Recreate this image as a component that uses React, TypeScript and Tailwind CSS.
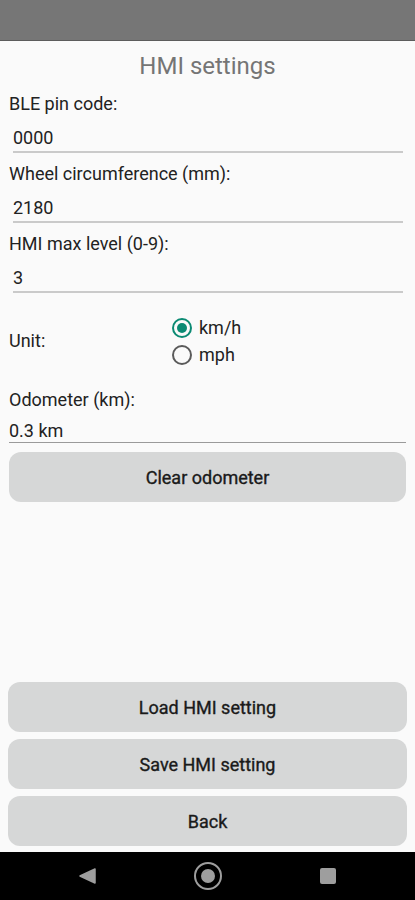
import React, { useState } from "react";

// ─── Small pieces ──────────────────────────────────────────────────────────

function Field({ label, value }: { label: string; value: string }) {
  return (
    <div className="flex flex-col">
      <div className="pl-[9px] h-6 leading-6 text-[18px] text-[#222]">{label}</div>
      <div className="mt-[10px] ml-[13px] mr-[12px] pb-px border-b-2 border-[#cacaca]">
        <div className="h-6 leading-6 text-[18px] text-[#222]">{value}</div>
      </div>
      <div className="h-[9px]" />
    </div>
  );
}

function Radio({
  checked,
  label,
  onClick,
}: {
  checked: boolean;
  label: string;
  onClick: () => void;
}) {
  return (
    <button type="button" onClick={onClick} className="h-[27px] flex items-center gap-[7px]">
      <span
        className={`w-5 h-5 rounded-full border-2 flex items-center justify-center ${
          checked ? "border-[#0b8a73]" : "border-[#5a5a5a]"
        }`}
      >
        {checked && <span className="w-[10px] h-[10px] rounded-full bg-[#0b8a73]" />}
      </span>
      <span className="text-[18px] leading-6 text-[#222]">{label}</span>
    </button>
  );
}

// button labels look medium weight, but Roboto Medium renders too heavy here
function GreyButton({ children, className = "" }: { children: React.ReactNode; className?: string }) {
  return (
    <button
      type="button"
      className={`h-[50px] rounded-[12px] bg-[#d6d7d7] text-[18px] text-[#1a1a1a] flex items-center justify-center [-webkit-text-stroke:0.35px_#1a1a1a] ${className}`}
    >
      {children}
    </button>
  );
}

// ─── Page ──────────────────────────────────────────────────────────────────

export default function App() {
  const [unit, setUnit] = useState<"kmh" | "mph">("kmh");

  return (
    <div
      className="h-[900px] w-[415px] flex flex-col bg-[#fafafa] overflow-hidden"
      style={{ fontFamily: "Roboto, 'Liberation Sans', sans-serif" }}
    >
      {/* Status bar */}
      <div className="h-10 shrink-0 bg-[#767676] border-b border-[#5c5c5c] box-content" />

      {/* Content */}
      <div className="flex-1 flex flex-col min-h-0">
        <h1 className="mt-[9px] h-8 leading-8 text-center text-[24px] text-[#757575]">HMI settings</h1>
        <div className="h-[10px]" />

        <Field label="BLE pin code:" value="0000" />
        <Field label="Wheel circumference (mm):" value="2180" />
        <Field label="HMI max level (0-9):" value="3" />

        {/* Unit */}
        <div className="mt-[12px] flex items-center">
          <div className="w-[172px] pl-[9px] text-[18px] leading-6 text-[#222]">Unit:</div>
          <div className="flex flex-col items-start">
            <Radio checked={unit === "kmh"} label="km/h" onClick={() => setUnit("kmh")} />
            <Radio checked={unit === "mph"} label="mph" onClick={() => setUnit("mph")} />
          </div>
        </div>

        {/* Odometer */}
        <div className="mt-[20px] pl-[9px] h-6 leading-6 text-[18px] text-[#222]">Odometer (km):</div>
        <div className="mt-[8px] mx-[9px] border-b border-[#9a9a9a]">
          <div className="h-[22px] leading-[22px] text-[18px] text-[#222]">0.3 km</div>
        </div>
        <GreyButton className="mt-[9px] mx-[9px]">Clear odometer</GreyButton>

        <div className="flex-1" />

        <div className="flex flex-col gap-[7px] mx-[8px] mb-[6px]">
          <GreyButton>Load HMI setting</GreyButton>
          <GreyButton>Save HMI setting</GreyButton>
          <GreyButton>Back</GreyButton>
        </div>
      </div>

      {/* Navigation bar */}
      <div className="h-12 shrink-0 bg-black flex items-center justify-center">
        <div className="w-[120px] flex justify-center">
          <svg width="17" height="16" viewBox="0 0 17 16">
            <path d="M16 1 L1 8 L16 15 Z" fill="#9e9e9e" stroke="#9e9e9e" strokeLinejoin="round" strokeWidth="1.5" />
          </svg>
        </div>
        <div className="w-[120px] flex justify-center">
          <span className="w-[28px] h-[28px] rounded-full border-2 border-[#9e9e9e] flex items-center justify-center">
            <span className="w-[14px] h-[14px] rounded-full bg-[#9e9e9e]" />
          </span>
        </div>
        <div className="w-[120px] flex justify-center">
          <span className="w-4 h-4 rounded-[2px] bg-[#9e9e9e]" />
        </div>
      </div>
    </div>
  );
}
